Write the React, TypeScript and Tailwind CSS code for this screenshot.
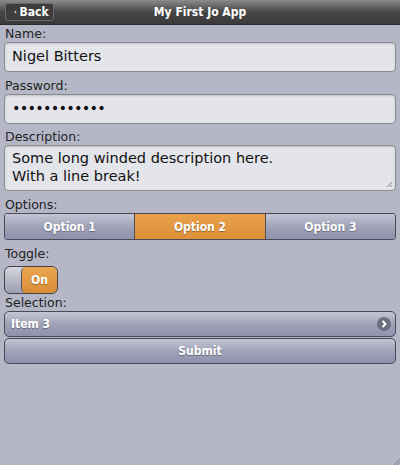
import { useState } from "react";

const font = { fontFamily: '"DejaVu Sans", Verdana, sans-serif' };
const condensed = { fontFamily: '"DejaVu Sans Condensed", "DejaVu Sans", Tahoma, sans-serif' };

function Label({ children, className = "" }: { children: string; className?: string }) {
    return <div className={"h-[17px] leading-[17px] text-[12.5px] text-[#222] px-[5px] " + className}>{children}</div>;
}

const field = "rounded-[4px] border border-[#8a8a92] bg-[#e4e5ea] shadow-[inset_0_1px_2px_rgba(0,0,0,0.15)] text-[14.5px] text-[#111]";
const bluish = "bg-gradient-to-b from-[#c4c6d5] via-[#a0a2b8] to-[#8e91ab]";
const btnText = "text-white text-[12px] font-bold [text-shadow:0_1px_1px_rgba(0,0,0,0.35)]";

export default function App() {
    const [option, setOption] = useState(1);
    const options = ["Option 1", "Option 2", "Option 3"];

    return (
        <div className="w-[400px] h-[465px] bg-[#b5b7c6] flex flex-col relative overflow-hidden" style={font}>
            {/* Navbar */}
            <div className="h-[25px] shrink-0 flex items-center relative bg-gradient-to-b from-[#8c8c8c] via-[#464646] to-[#3a3a3a] border-b border-[#2a2a2a]">
                <button className="ml-[5px] h-[18px] pl-[8px] pr-[4px] flex items-center gap-[3px] rounded-[3px] border border-[#6a6a6a] bg-[#3d3d3d] text-white text-[12px] font-bold leading-none" style={condensed}>
                    <span className="text-[7px] leading-none">‹</span>Back
                </button>
                <div className="absolute inset-0 flex items-center justify-center text-white text-[12px] font-bold pointer-events-none" style={condensed}>
                    My First Jo App
                </div>
            </div>

            <div className="flex flex-col px-[4px]">
                <Label className="-mx-[4px]">Name:</Label>
                <div className={"h-[30px] flex items-center px-[7px] " + field}>Nigel Bitters</div>

                <Label className="-mx-[4px] mt-[5px]">Password:</Label>
                <div className={"h-[30px] flex items-center px-[7px] tracking-[-0.8px] " + field}>••••••••••••</div>

                <Label className="-mx-[4px] mt-[4px]">Description:</Label>
                <div className={"h-[46px] px-[7px] pt-[3px] leading-[18px] relative " + field}>
                    Some long winded description here.
                    <br />
                    With a line break!
                    <svg className="absolute right-[2px] bottom-[2px]" width="7" height="7" viewBox="0 0 7 7">
                        <path d="M6 1L1 6M6 4L4 6" stroke="#888" strokeWidth="1" />
                    </svg>
                </div>

                <Label className="-mx-[4px] mt-[5px]">Options:</Label>
                <div className="h-[27px] flex rounded-[3px] border border-[#4a4a55] overflow-hidden">
                    {options.map((o, i) => (
                        <button
                            key={o}
                            onClick={() => setOption(i)}
                            style={condensed}
                            className={
                                "flex-1 flex items-center justify-center " + btnText + " " +
                                (i > 0 ? "border-l border-[#4a4a55] " : "") +
                                (option === i ? "bg-gradient-to-b from-[#eaa14c] to-[#dc9038]" : bluish)
                            }
                        >
                            {o}
                        </button>
                    ))}
                </div>

                <Label className="-mx-[4px] mt-[5px]">Toggle:</Label>
                <div className="mt-[4px] w-[54px] h-[28px] flex rounded-[6px] border border-[#444] overflow-hidden bg-gradient-to-b from-[#d5d6de] to-[#9c9eb2]">
                    <div className="w-[16px]" />
                    <div className={"flex-1 rounded-[5px] border-l border-[#555] bg-gradient-to-b from-[#eba650] to-[#d98d35] flex items-center justify-center " + btnText} style={condensed}>
                        On
                    </div>
                </div>

                <Label className="-mx-[4px]">Selection:</Label>
                <div className={"h-[26px] rounded-[5px] border border-[#4a4a55] flex items-center justify-between pl-[6px] pr-[4px] " + bluish + " " + btnText} style={condensed}>
                    <span>Item 3</span>
                    <svg width="14" height="14" viewBox="0 0 14 14">
                        <circle cx="7" cy="7" r="7" fill="#6d6f7e" />
                        <path d="M5.5 4L8.5 7L5.5 10" stroke="#fff" strokeWidth="2" fill="none" />
                    </svg>
                </div>

                <button className={"mt-[1px] h-[26px] rounded-[5px] border border-[#4a4a55] flex items-center justify-center " + bluish + " " + btnText} style={condensed}>
                    Submit
                </button>
            </div>

            <svg className="absolute right-0 bottom-0" width="6" height="6" viewBox="0 0 6 6">
                <path d="M6 0L0 6M6 3L3 6" stroke="#7a7c90" strokeWidth="1" />
            </svg>
        </div>
    );
}
